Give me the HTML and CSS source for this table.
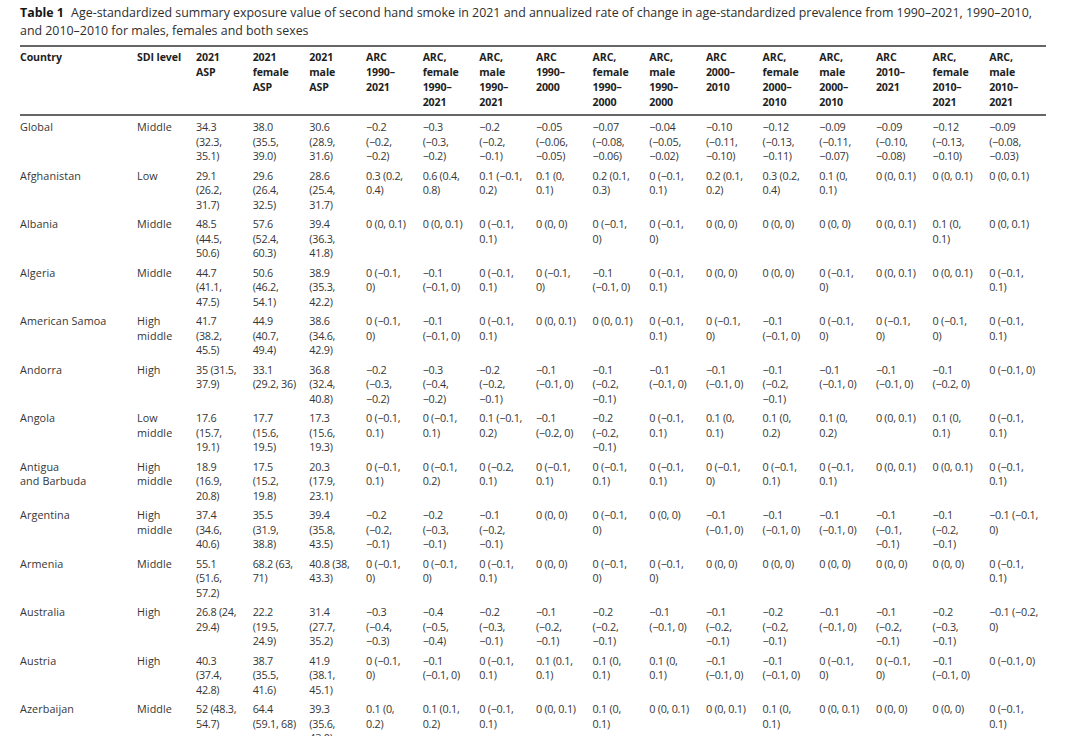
FILE: index.html
```html
<!DOCTYPE html>
<html lang="en">
<head>
<meta charset="utf-8">
<title>Table 1</title>
<link rel="stylesheet" href="styles.css">
</head>
<body>
<p class="caption"><b class="caption-label">Table 1</b> Age-standardized summary exposure value of second hand smoke in 2021 and annualized rate of change in age-standardized prevalence from 1990–2021, 1990–2010,<br>and 2010–2010 for males, females and both sexes</p>
<table class="data">
<colgroup><col class="col-country"><col class="col-sdi"><col span="15"></colgroup>
<thead>
<tr><th>Country</th><th>SDI level</th><th>2021<br>ASP</th><th>2021<br>female<br>ASP</th><th>2021<br>male<br>ASP</th><th>ARC<br>1990–<br>2021</th><th>ARC,<br>female<br>1990–<br>2021</th><th>ARC,<br>male<br>1990–<br>2021</th><th>ARC<br>1990–<br>2000</th><th>ARC,<br>female<br>1990–<br>2000</th><th>ARC,<br>male<br>1990–<br>2000</th><th>ARC<br>2000–<br>2010</th><th>ARC,<br>female<br>2000–<br>2010</th><th>ARC,<br>male<br>2000–<br>2010</th><th>ARC<br>2010–<br>2021</th><th>ARC,<br>female<br>2010–<br>2021</th><th>ARC,<br>male<br>2010–<br>2021</th></tr>
</thead>
<tbody>
<tr><td class="name">Global</td><td class="name">Middle</td><td>34.3<br>(32.3,<br>35.1)</td><td>38.0<br>(35.5,<br>39.0)</td><td>30.6<br>(28.9,<br>31.6)</td><td>−0.2<br>(−0.2,<br>−0.2)</td><td>−0.3<br>(−0.3,<br>−0.2)</td><td>−0.2<br>(−0.2,<br>−0.1)</td><td>−0.05<br>(−0.06,<br>−0.05)</td><td>−0.07<br>(−0.08,<br>−0.06)</td><td>−0.04<br>(−0.05,<br>−0.02)</td><td>−0.10<br>(−0.11,<br>−0.10)</td><td>−0.12<br>(−0.13,<br>−0.11)</td><td>−0.09<br>(−0.11,<br>−0.07)</td><td>−0.09<br>(−0.10,<br>−0.08)</td><td>−0.12<br>(−0.13,<br>−0.10)</td><td>−0.09<br>(−0.08,<br>−0.03)</td></tr>
<tr><td class="name">Afghanistan</td><td class="name">Low</td><td>29.1<br>(26.2,<br>31.7)</td><td>29.6<br>(26.4,<br>32.5)</td><td>28.6<br>(25.4,<br>31.7)</td><td>0.3 (0.2,<br>0.4)</td><td>0.6 (0.4,<br>0.8)</td><td>0.1 (−0.1,<br>0.2)</td><td>0.1 (0,<br>0.1)</td><td>0.2 (0.1,<br>0.3)</td><td>0 (−0.1,<br>0.1)</td><td>0.2 (0.1,<br>0.2)</td><td>0.3 (0.2,<br>0.4)</td><td>0.1 (0,<br>0.1)</td><td>0 (0, 0.1)</td><td>0 (0, 0.1)</td><td>0 (0, 0.1)</td></tr>
<tr><td class="name">Albania</td><td class="name">Middle</td><td>48.5<br>(44.5,<br>50.6)</td><td>57.6<br>(52.4,<br>60.3)</td><td>39.4<br>(36.3,<br>41.8)</td><td>0 (0, 0.1)</td><td>0 (0, 0.1)</td><td>0 (−0.1,<br>0.1)</td><td>0 (0, 0)</td><td>0 (−0.1,<br>0)</td><td>0 (−0.1,<br>0)</td><td>0 (0, 0)</td><td>0 (0, 0)</td><td>0 (0, 0)</td><td>0 (0, 0.1)</td><td>0.1 (0,<br>0.1)</td><td>0 (0, 0.1)</td></tr>
<tr><td class="name">Algeria</td><td class="name">Middle</td><td>44.7<br>(41.1,<br>47.5)</td><td>50.6<br>(46.2,<br>54.1)</td><td>38.9<br>(35.3,<br>42.2)</td><td>0 (−0.1,<br>0)</td><td>−0.1<br>(−0.1, 0)</td><td>0 (−0.1,<br>0.1)</td><td>0 (−0.1,<br>0)</td><td>−0.1<br>(−0.1, 0)</td><td>0 (−0.1,<br>0.1)</td><td>0 (0, 0)</td><td>0 (0, 0)</td><td>0 (−0.1,<br>0)</td><td>0 (0, 0.1)</td><td>0 (0, 0.1)</td><td>0 (−0.1,<br>0.1)</td></tr>
<tr><td class="name">American Samoa</td><td class="name">High<br>middle</td><td>41.7<br>(38.2,<br>45.5)</td><td>44.9<br>(40.7,<br>49.4)</td><td>38.6<br>(34.6,<br>42.9)</td><td>0 (−0.1,<br>0)</td><td>−0.1<br>(−0.1, 0)</td><td>0 (−0.1,<br>0.1)</td><td>0 (0, 0.1)</td><td>0 (0, 0.1)</td><td>0 (−0.1,<br>0.1)</td><td>0 (−0.1,<br>0)</td><td>−0.1<br>(−0.1, 0)</td><td>0 (−0.1,<br>0)</td><td>0 (−0.1,<br>0)</td><td>0 (−0.1,<br>0)</td><td>0 (−0.1,<br>0.1)</td></tr>
<tr><td class="name">Andorra</td><td class="name">High</td><td>35 (31.5,<br>37.9)</td><td>33.1<br>(29.2, 36)</td><td>36.8<br>(32.4,<br>40.8)</td><td>−0.2<br>(−0.3,<br>−0.2)</td><td>−0.3<br>(−0.4,<br>−0.2)</td><td>−0.2<br>(−0.2,<br>−0.1)</td><td>−0.1<br>(−0.1, 0)</td><td>−0.1<br>(−0.2,<br>−0.1)</td><td>−0.1<br>(−0.1, 0)</td><td>−0.1<br>(−0.1, 0)</td><td>−0.1<br>(−0.2,<br>−0.1)</td><td>−0.1<br>(−0.1, 0)</td><td>−0.1<br>(−0.1, 0)</td><td>−0.1<br>(−0.2, 0)</td><td>0 (−0.1, 0)</td></tr>
<tr><td class="name">Angola</td><td class="name">Low<br>middle</td><td>17.6<br>(15.7,<br>19.1)</td><td>17.7<br>(15.6,<br>19.5)</td><td>17.3<br>(15.6,<br>19.3)</td><td>0 (−0.1,<br>0.1)</td><td>0 (−0.1,<br>0.1)</td><td>0.1 (−0.1,<br>0.2)</td><td>−0.1<br>(−0.2, 0)</td><td>−0.2<br>(−0.2,<br>−0.1)</td><td>0 (−0.1,<br>0.1)</td><td>0.1 (0,<br>0.1)</td><td>0.1 (0,<br>0.2)</td><td>0.1 (0,<br>0.2)</td><td>0 (0, 0.1)</td><td>0.1 (0,<br>0.1)</td><td>0 (−0.1,<br>0.1)</td></tr>
<tr><td class="name">Antigua<br>and Barbuda</td><td class="name">High<br>middle</td><td>18.9<br>(16.9,<br>20.8)</td><td>17.5<br>(15.2,<br>19.8)</td><td>20.3<br>(17.9,<br>23.1)</td><td>0 (−0.1,<br>0.1)</td><td>0 (−0.1,<br>0.2)</td><td>0 (−0.2,<br>0.1)</td><td>0 (−0.1,<br>0.1)</td><td>0 (−0.1,<br>0.1)</td><td>0 (−0.1,<br>0.1)</td><td>0 (−0.1,<br>0)</td><td>0 (−0.1,<br>0.1)</td><td>0 (−0.1,<br>0.1)</td><td>0 (0, 0.1)</td><td>0 (0, 0.1)</td><td>0 (−0.1,<br>0.1)</td></tr>
<tr><td class="name">Argentina</td><td class="name">High<br>middle</td><td>37.4<br>(34.6,<br>40.6)</td><td>35.5<br>(31.9,<br>38.8)</td><td>39.4<br>(35.8,<br>43.5)</td><td>−0.2<br>(−0.2,<br>−0.1)</td><td>−0.2<br>(−0.3,<br>−0.1)</td><td>−0.1<br>(−0.2,<br>−0.1)</td><td>0 (0, 0)</td><td>0 (−0.1,<br>0)</td><td>0 (0, 0)</td><td>−0.1<br>(−0.1, 0)</td><td>−0.1<br>(−0.1, 0)</td><td>−0.1<br>(−0.1, 0)</td><td>−0.1<br>(−0.1,<br>−0.1)</td><td>−0.1<br>(−0.2,<br>−0.1)</td><td>−0.1 (−0.1,<br>0)</td></tr>
<tr><td class="name">Armenia</td><td class="name">Middle</td><td>55.1<br>(51.6,<br>57.2)</td><td>68.2 (63,<br>71)</td><td>40.8 (38,<br>43.3)</td><td>0 (−0.1,<br>0)</td><td>0 (−0.1,<br>0)</td><td>0 (−0.1,<br>0.1)</td><td>0 (0, 0)</td><td>0 (−0.1,<br>0)</td><td>0 (−0.1,<br>0)</td><td>0 (0, 0)</td><td>0 (0, 0)</td><td>0 (0, 0)</td><td>0 (0, 0)</td><td>0 (0, 0)</td><td>0 (−0.1,<br>0.1)</td></tr>
<tr><td class="name">Australia</td><td class="name">High</td><td>26.8 (24,<br>29.4)</td><td>22.2<br>(19.5,<br>24.9)</td><td>31.4<br>(27.7,<br>35.2)</td><td>−0.3<br>(−0.4,<br>−0.3)</td><td>−0.4<br>(−0.5,<br>−0.4)</td><td>−0.2<br>(−0.3,<br>−0.1)</td><td>−0.1<br>(−0.2,<br>−0.1)</td><td>−0.2<br>(−0.2,<br>−0.1)</td><td>−0.1<br>(−0.1, 0)</td><td>−0.1<br>(−0.2,<br>−0.1)</td><td>−0.2<br>(−0.2,<br>−0.1)</td><td>−0.1<br>(−0.1, 0)</td><td>−0.1<br>(−0.2,<br>−0.1)</td><td>−0.2<br>(−0.3,<br>−0.1)</td><td>−0.1 (−0.2,<br>0)</td></tr>
<tr><td class="name">Austria</td><td class="name">High</td><td>40.3<br>(37.4,<br>42.8)</td><td>38.7<br>(35.5,<br>41.6)</td><td>41.9<br>(38.1,<br>45.1)</td><td>0 (−0.1,<br>0)</td><td>−0.1<br>(−0.1, 0)</td><td>0 (−0.1,<br>0.1)</td><td>0.1 (0.1,<br>0.1)</td><td>0.1 (0,<br>0.1)</td><td>0.1 (0,<br>0.1)</td><td>−0.1<br>(−0.1, 0)</td><td>−0.1<br>(−0.1, 0)</td><td>0 (−0.1,<br>0)</td><td>0 (−0.1,<br>0)</td><td>−0.1<br>(−0.1, 0)</td><td>0 (−0.1, 0)</td></tr>
<tr><td class="name">Azerbaijan</td><td class="name">Middle</td><td>52 (48.3,<br>54.7)</td><td>64.4<br>(59.1, 68)</td><td>39.3<br>(35.6,<br>43.0)</td><td>0.1 (0,<br>0.2)</td><td>0.1 (0.1,<br>0.2)</td><td>0 (−0.1,<br>0.1)</td><td>0 (0, 0.1)</td><td>0.1 (0,<br>0.1)</td><td>0 (0, 0.1)</td><td>0 (0, 0.1)</td><td>0.1 (0,<br>0.1)</td><td>0 (0, 0.1)</td><td>0 (0, 0)</td><td>0 (0, 0)</td><td>0 (−0.1,<br>0.1)</td></tr>
</tbody>
</table>
</body>
</html>
```

FILE: styles.css
```css
html, body {
  margin: 0;
  background: #ffffff;
}

body {
  padding: 4px 20px 0;
  font-family: "Open Sans", "Noto Sans", sans-serif;
  color: #333333;
}

.caption {
  margin: 0 0 5px;
  font-size: 12.4px;
  line-height: 18px;
  white-space: nowrap;
  color: #2e2e2e;
}

.caption-label {
  color: #151515;
  margin-right: 4px;
}

.data {
  width: 1026px;
  table-layout: fixed;
  border-collapse: collapse;
  font-size: 10.8px;
  letter-spacing: -0.25px;
}

.col-country { width: 117px; }
.col-sdi { width: 59px; }

.data th {
  text-align: left;
  vertical-align: top;
  font-weight: 700;
  font-size: 10.6px;
  letter-spacing: -0.1px;
  line-height: 15px;
  padding: 2.5px 0 4.5px;
  border-top: 2px solid #666666;
  border-bottom: 2px solid #666666;
  color: #1e1e1e;
  white-space: nowrap;
}

.data td {
  text-align: left;
  vertical-align: top;
  line-height: 14.7px;
  padding: 2px 0 2.4px;
  white-space: nowrap;
  color: #363636;
}

.data td.name {
  letter-spacing: 0.1px;
}

.data tbody tr:first-child td {
  padding-top: 4px;
}
```
